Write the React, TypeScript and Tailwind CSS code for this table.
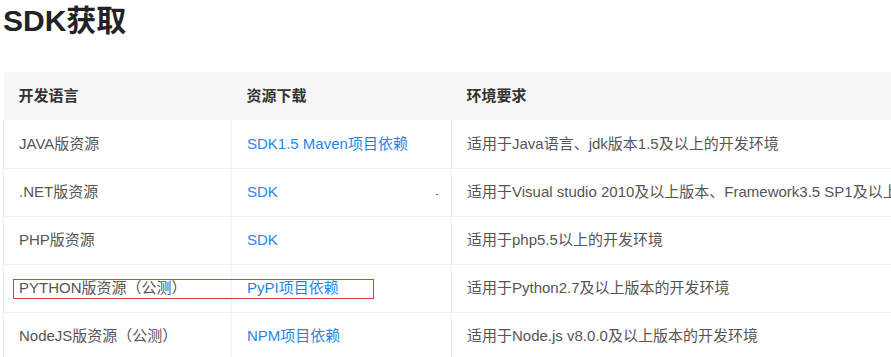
const rows = [
  { lang: "JAVA版资源", link: "SDK1.5 Maven项目依赖", env: "适用于Java语言、jdk版本1.5及以上的开发环境" },
  {
    lang: ".NET版资源",
    link: "SDK",
    env: "适用于Visual studio 2010及以上版本、Framework3.5 SP1及以上版本的开发环境",
  },
  { lang: "PHP版资源", link: "SDK", env: "适用于php5.5以上的开发环境" },
  { lang: "PYTHON版资源（公测）", link: "PyPI项目依赖", env: "适用于Python2.7及以上版本的开发环境" },
  { lang: "NodeJS版资源（公测）", link: "NPM项目依赖", env: "适用于Node.js v8.0.0及以上版本的开发环境" },
];

export default function App() {
  return (
    <div
      className="w-[891px] h-[357px] overflow-hidden bg-white pl-[3px]"
      style={{ fontFamily: '"Liberation Sans", "Noto Sans CJK SC", sans-serif' }}
    >
      <h1 className="text-[30px] font-bold leading-[42px] text-[#222] h-[72px]">SDK获取</h1>

      <div className="relative w-[1000px]">
        <table className="w-full border-collapse text-[15px] table-fixed">
          <colgroup>
            <col className="w-[228px]" />
            <col className="w-[220px]" />
            <col />
          </colgroup>
          <thead>
            <tr className="bg-[#f7f7f7] h-[48px] text-left text-[#333]">
              <th className="font-bold pl-[15px] rounded-tl-[4px]">开发语言</th>
              <th className="font-bold pl-[15px]">资源下载</th>
              <th className="font-bold pl-[15px]">环境要求</th>
            </tr>
          </thead>
          <tbody>
            {rows.map((r) => (
              <tr key={r.lang} className="h-[48px] border-b border-[#eef0f3]">
                <td className="pl-[15px] text-[#555] border-l border-[#eef0f3] whitespace-nowrap">{r.lang}</td>
                <td className="pl-[15px] text-[#1f86e6] border-l border-[#eef0f3] whitespace-nowrap">{r.link}</td>
                <td className="pl-[15px] text-[#555] border-l border-[#eef0f3] whitespace-nowrap overflow-hidden">
                  {r.env}
                </td>
              </tr>
            ))}
          </tbody>
        </table>

        {/* annotation box around the python row */}
        <div className="absolute left-[10px] top-[207px] w-[361px] h-[20px] border border-[#e0393e]" />
        <span className="absolute left-[433px] top-[122px] w-[2px] h-[1px] bg-[#e0393e]" />
      </div>
    </div>
  );
}
